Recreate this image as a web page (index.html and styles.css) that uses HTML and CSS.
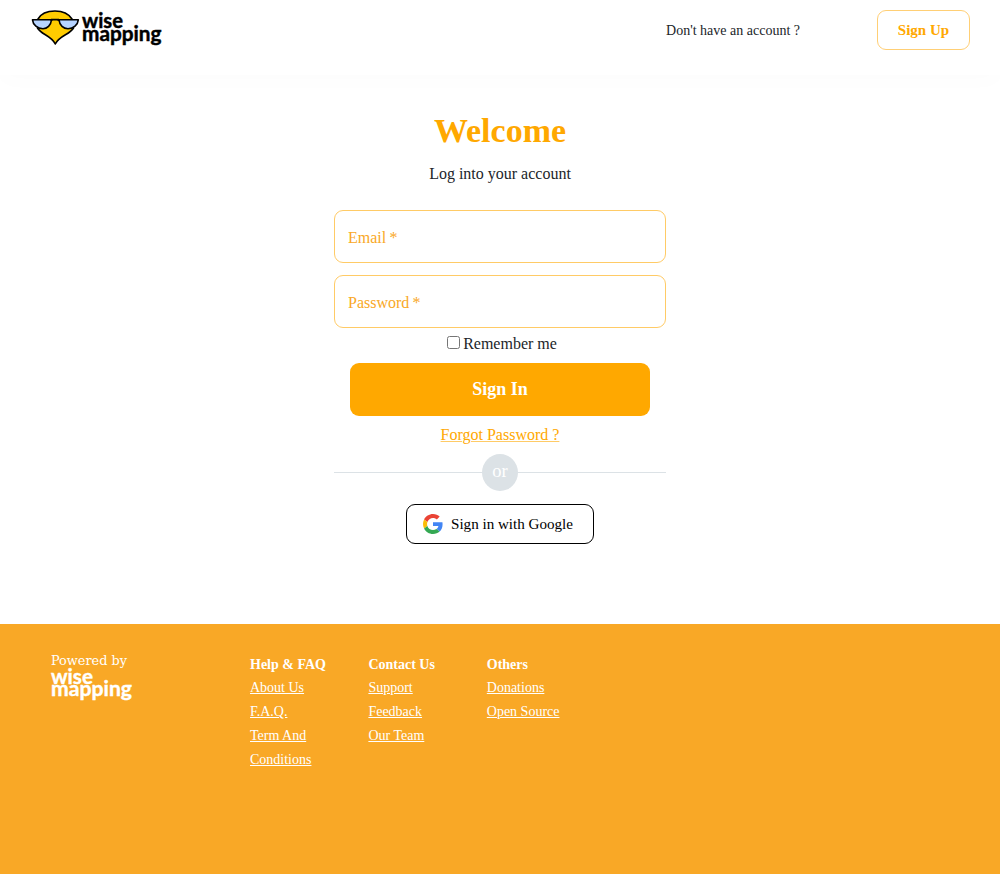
FILE: index.html
```html
<!DOCTYPE html>
<html lang="en">
<head>
<meta charset="utf-8">
<title>Login | WiseMapping</title>
<link rel="stylesheet" href="styles.css">
</head>
<body>
<header class="header">
  <a class="logo" aria-label="WiseMapping">
    <svg width="136" height="44" viewBox="0 0 136 44">
      <g stroke="#000" stroke-width="1.6" stroke-linejoin="round">
        <path fill="#ffcc00" d="M8 11C11 5.500 17 3 25 3S38.500 5.500 42 11L43.500 20C40 26.500 29 27.500 25.300 36C21.500 27.500 11 26.500 7.500 20Z"/>
        <path fill="#b7d4ff" d="M2.500 11.800H21.500C21 17.500 17 20.700 13 20.700C7.500 20.700 3 17 2.500 11.800Z"/>
        <path fill="#b7d4ff" d="M29 11.800H48.300C47.800 17 43.500 20.700 38 20.700C33.500 20.700 29.500 17.500 29 11.800Z"/>
        <path fill="none" d="M21 13C22 11 28 11 29 13M21 11.600H29"/>
      </g>
      <g class="wordmark">
        <text x="52" y="19.900" textLength="41" lengthAdjust="spacingAndGlyphs">wise</text>
        <text x="52" y="32.800" textLength="79.500" lengthAdjust="spacingAndGlyphs">mapping</text>
      </g>
    </svg>
  </a>
  <span class="header-text">Don't have an account ?</span>
  <a class="signup">Sign Up</a>
</header>
<main class="main">
  <h1 class="title">Welcome</h1>
  <p class="subtitle">Log into your account</p>
  <form class="form">
    <div class="field"><input class="input" type="email" aria-label="Email" placeholder="Email&#8201;*"></div>
    <div class="field"><input class="input" type="password" aria-label="Password" placeholder="Password&#8201;*"></div>
    <label class="remember"><input class="check" type="checkbox"><span>Remember me</span></label>
    <button class="submit" type="button">Sign In</button>
  </form>
  <a class="forgot">Forgot Password ?</a>
  <div class="divider"><span class="or">or</span></div>
  <button class="google" type="button">
    <svg width="20" height="20" viewBox="0 0 48 48">
      <path fill="#ea4335" d="M24 9.500c3.540 0 6.710 1.220 9.210 3.600l6.850-6.850C35.900 2.380 30.470 0 24 0 14.620 0 6.510 5.380 2.560 13.220l7.980 6.190C12.430 13.720 17.740 9.500 24 9.500z"/>
      <path fill="#4285f4" d="M46.980 24.550c0-1.570-.15-3.090-.38-4.550H24v9.020h12.940c-.58 2.960-2.260 5.480-4.780 7.180l7.730 6c4.510-4.180 7.090-10.360 7.090-17.650z"/>
      <path fill="#fbbc05" d="M10.530 28.590c-.48-1.450-.76-2.990-.76-4.590s.27-3.140.76-4.590l-7.980-6.190C.92 16.460 0 20.120 0 24s.92 7.540 2.560 10.780l7.970-6.190z"/>
      <path fill="#34a853" d="M24 48c6.480 0 11.930-2.130 15.890-5.810l-7.730-6c-2.150 1.450-4.920 2.300-8.160 2.300-6.260 0-11.570-4.220-13.470-9.910l-7.980 6.190C6.510 42.620 14.620 48 24 48z"/>
    </svg>
    <span>Sign in with Google</span>
  </button>
</main>
<footer class="footer">
  <svg class="powered" width="90" height="54" viewBox="0 0 90 54">
    <text class="powered-by" x="1" y="13.300" textLength="76" lengthAdjust="spacingAndGlyphs">Powered by</text>
    <g class="wordmark">
      <text x="1" y="31.600" textLength="42" lengthAdjust="spacingAndGlyphs">wise</text>
      <text x="1" y="44.300" textLength="81" lengthAdjust="spacingAndGlyphs">mapping</text>
    </g>
  </svg>
  <nav class="links">
    <div class="col"><h2 class="col-title">Help &amp; FAQ</h2><a>About Us</a><a>F.A.Q.</a><a>Term And Conditions</a></div>
    <div class="col"><h2 class="col-title">Contact Us</h2><a>Support</a><a>Feedback</a><a>Our Team</a></div>
    <div class="col"><h2 class="col-title">Others</h2><a>Donations</a><a>Open Source</a></div>
  </nav>
</footer>
</body>
</html>
```
FILE: styles.css
```css
* { box-sizing: border-box; }
body {
  margin: 0;
  min-height: 874px;
  display: flex;
  flex-direction: column;
  font: 16px/24px "Liberation Serif", serif;
  color: #212529;
  background: #fff;
}
.header {
  height: 75px;
  padding: 10px 30px 0;
  display: flex;
  align-items: flex-start;
  box-shadow: 0 8px 20px rgba(0, 0, 0, 0.013);
}
.logo { display: block; height: 44px; margin-top: -2px; }
.logo svg { display: block; }
.wordmark { font: bold 20.8px Lato, sans-serif; stroke-width: 0.45; }
.header .wordmark { fill: #000; stroke: #000; }
.header-text { margin-left: auto; font-size: 14px; line-height: 42px; }
.signup {
  width: 93px;
  height: 40px;
  margin-left: 77px;
  border: 1px solid #ffcf75;
  border-radius: 9px;
  color: #ffa800;
  font-size: 15px;
  font-weight: bold;
  line-height: 38px;
  text-align: center;
}
.main {
  height: 549px;
  padding-top: 35px;
  display: flex;
  flex-direction: column;
  align-items: center;
}
.title { margin: 0; color: #ffa800; font-size: 34px; line-height: 41px; }
.subtitle { margin: 11px 0 24px; }
.form { width: 332px; display: flex; flex-direction: column; align-items: center; }
.field { width: 100%; height: 53px; margin-bottom: 12px; }
.input {
  width: 100%;
  height: 53px;
  padding: 2px 13px 0;
  border: 1px solid #ffcb66;
  border-radius: 9px;
  background: #fff;
  font: 16px "Liberation Serif", serif;
}
.input::placeholder { color: #f9a826; opacity: 1; }
.remember { display: flex; align-items: center; height: 24px; margin: -8px 0 7px 4px; line-height: 24px; }
.check { width: 13px; height: 13px; margin: 0 3px 3px 0; }
.submit {
  width: 300px;
  height: 53px;
  border: 0;
  border-radius: 9px;
  background: #ffa800;
  color: #fff;
  font: bold 18px "Liberation Serif", serif;
}
.forgot { margin-top: 7px; color: #ffa800; text-decoration: underline; text-decoration-color: #ffcb66; text-decoration-thickness: 1px; }
.divider {
  width: 332px;
  height: 37px;
  margin: 7px 0 13px;
  display: flex;
  align-items: center;
}
.divider::before, .divider::after { content: ""; flex: 1; height: 1px; background: #dce2e6; }
.or {
  width: 36px;
  height: 37px;
  border-radius: 50%;
  background: #dce2e6;
  color: #fff;
  font-size: 18.5px;
  line-height: 35px;
  text-align: center;
}
.google {
  width: 188px;
  height: 40px;
  padding: 0 16px;
  display: flex;
  align-items: center;
  gap: 8px;
  border: 1px solid #000;
  border-radius: 9px;
  background: #fff;
  color: #000;
  font: 15.1px "Liberation Serif", serif;
}
.footer {
  flex: 1;
  min-height: 250px;
  padding: 28px 50px 0;
  display: flex;
  background: #f9a826;
  color: #fff;
  font-size: 14px;
}
.powered { flex: none; margin-right: 110px; fill: #fff; }
.footer .wordmark { stroke: #fff; stroke-width: 0.4; }
.powered-by { font: 13.5px "DejaVu Serif", serif; }
.links { display: grid; grid-template-columns: repeat(3, 78.4px); column-gap: 40px; }
.col { display: flex; flex-direction: column; align-items: flex-start; }
.col-title { margin: 1px 0 -1px; font-size: 14px; line-height: 24px; white-space: nowrap; }
.col a { text-decoration: underline; line-height: 24px; }
```
